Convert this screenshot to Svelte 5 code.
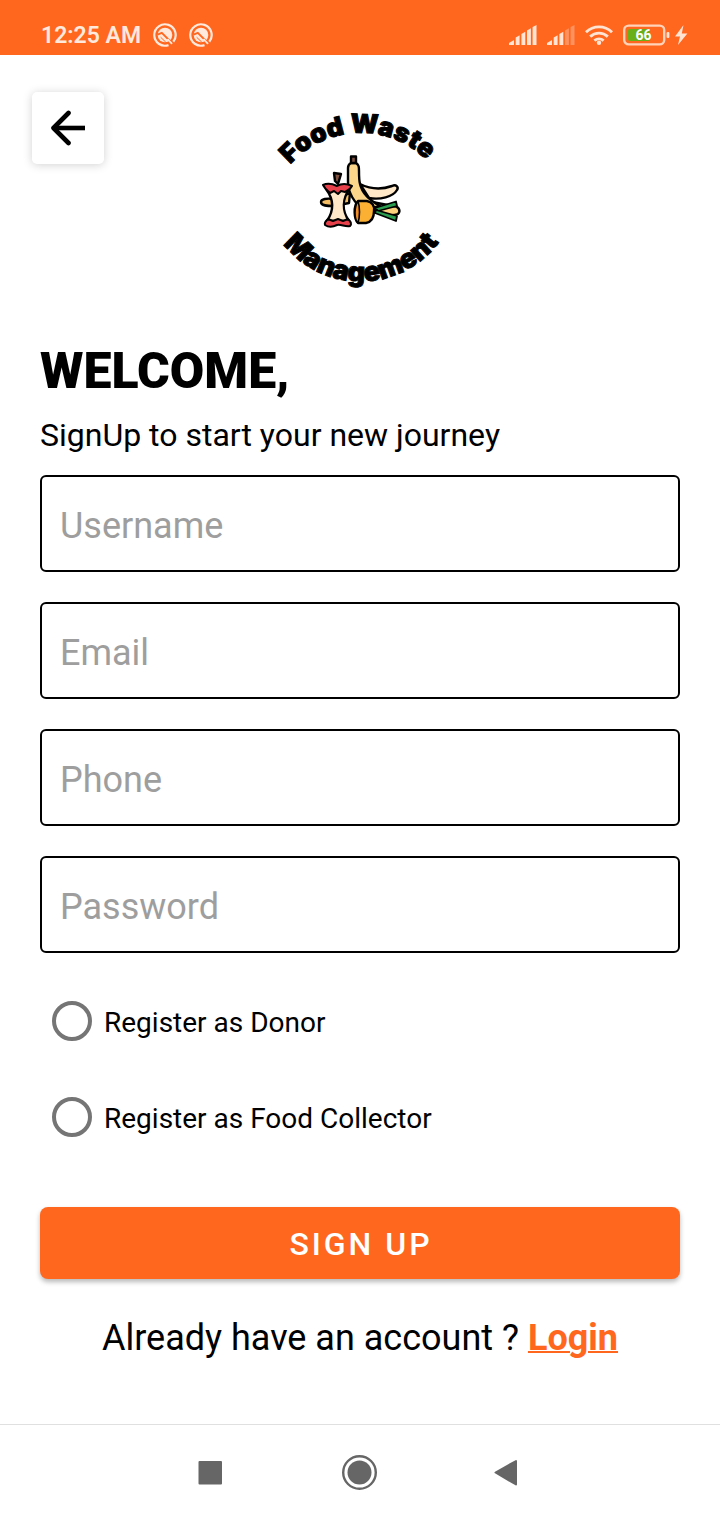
<script>
  const fields = [
    { id: 'username', label: 'Username', type: 'text' },
    { id: 'email', label: 'Email', type: 'email' },
    { id: 'phone', label: 'Phone', type: 'tel' },
    { id: 'password', label: 'Password', type: 'password' }
  ];
  const roles = [
    { id: 'donor', label: 'Register as Donor' },
    { id: 'collector', label: 'Register as Food Collector' }
  ];
  let role = $state('');
  const bars = [
    'M6.7 20V12.4L10.6 10.2V20Z',
    'M12.4 20V9L16.3 6.8V20Z',
    'M18 20V5.4L21.9 3.2V20Z',
    'M23.6 20V2L27.5 0V20Z'
  ];
</script>

{#snippet badge()}
  <svg width="24" height="24" viewBox="0 0 24 24" fill="none" aria-hidden="true">
    <path d="M15.5 22.1A10.7 10.7 0 1 1 20.3 18.7" stroke="#ffe9dc" stroke-width="2.2" />
    <circle cx="12" cy="12" r="7.3" fill="#ffe9dc" />
    <path d="M4.5 11.6L8.8 9.8L18.5 19.5" stroke="#ff671f" stroke-width="1.8" />
    <path d="M7.6 14.2L12.8 19.2" stroke="#ff671f" stroke-width="1" />
    <path d="M14.5 16L19 20.8" stroke="#ffe9dc" stroke-width="1.8" />
  </svg>
{/snippet}

{#snippet signal(strong)}
  <svg width="28" height="20" viewBox="0 0 28 20" fill="#ffe3d3" aria-hidden="true">
    <path d="M0 20V18L5 15V20Z" />
    {#each bars as bar, i}
      <path d={bar} opacity={i < strong ? 1 : 0.35} />
    {/each}
  </svg>
{/snippet}

<div class="screen">
  <div class="status">
    <div class="group left">
      <span class="time">12:25 AM</span>
      {@render badge()}
      {@render badge()}
    </div>
    <div class="group right">
      {@render signal(4)}
      {@render signal(2)}
      <svg width="28" height="20" viewBox="0 0 28 20" fill="none" stroke="#ffe3d3" stroke-width="2.9" aria-hidden="true">
        <path d="M1 7.2A18.6 18.6 0 0 1 27 7.2M5.2 11.6A12.8 12.8 0 0 1 22.8 11.6M9.4 15.6A7 7 0 0 1 18.6 15.6" />
        <circle cx="14" cy="17.8" r="2.2" fill="#ffe3d3" stroke="none" />
      </svg>
      <svg width="66" height="22" viewBox="0 0 66 22" aria-hidden="true">
        <rect x="1.2" y="1.6" width="40" height="18.8" rx="4.5" fill="none" stroke="#ffd3b9" stroke-width="2.4" />
        <rect x="5" y="5" width="22" height="12" rx="2" fill="#6aae18" />
        <rect x="43.6" y="8" width="2.8" height="6" rx="1" fill="#ffe3d3" />
        <text x="20.5" y="16" text-anchor="middle" class="charge">66</text>
        <path d="M60.5 1L52 12.6H57L55 21L64.4 9.4H58.8Z" fill="#ffe3d3" />
      </svg>
    </div>
  </div>

  <header>
    <button class="back" type="button" aria-label="Back">
      <svg width="36" height="36" viewBox="0 0 36 36" fill="none" stroke="#000" stroke-width="4.6" aria-hidden="true">
        <path d="M35 18H4" />
        <path d="M18.5 3L3.5 18L18.5 33" stroke-linecap="round" stroke-linejoin="round" />
      </svg>
    </button>
    <svg class="logo" width="180" height="190" viewBox="270 105 180 190" role="img" aria-label="Food Waste Management">
      <defs>
        <path id="arc-top" d="M285 171A94 94 0 0 1 432 166" />
        <path id="arc-bottom" d="M277 235A98 98 0 0 0 445 233" />
      </defs>
      <text class="arc"><textPath href="#arc-top" startOffset="50%" text-anchor="middle">Food Waste</textPath></text>
      <text class="arc lower"><textPath href="#arc-bottom" startOffset="50%" text-anchor="middle">Management</textPath></text>
      <g stroke="#000" stroke-width="2.4" stroke-linejoin="round" stroke-linecap="round">
        <path d="M333 199C327 198 321 199 321 202C321 206 327 206 334 206L349 203L350 193Z" fill="#f5bd63" />
        <path d="M360 184C370 189 381 190 392 186C396 184 399 187 397 190C393 197 380 200 369 198Z" fill="#ffe8c8" />
        <path d="M372 202L393 206C399 206 401 211 398 214C390 217 381 214 373 210Z" fill="#fbd17d" />
        <path d="M351 163L356 163C359 165 359 167 359 171C359 176 359 180 360 184C362 193 369 200 380 206L365 210C354 204 348 192 348 182V168C348 165 349 164 351 163Z" fill="#fcd78b" />
        <path d="M351 156.5H356V163H351Z" fill="#80513f" />
        <path d="M375 208L396 201.5L397 206L378 211Z" fill="#2b9d50" stroke-width="1.8" />
        <path d="M376 210L397 216L396 221L375 213Z" fill="#2b9d50" stroke-width="1.8" />
        <path d="M358 201H367C372 202 375 206 374 211C374 218 371 222 366 223L358 223C354 219 353 206 358 201Z" fill="#fbb034" />
        <path d="M358 201C354 207 354 219 358 223C360 217 360 207 358 201Z" fill="#f28c28" stroke-width="1.6" />
        <path d="M326 189C335 201 333 212 327 221L349 221C342 211 342 199 350 188Z" fill="#ffe8c8" />
        <path d="M323 185C327 183 333 184 337 186C342 183 348 184 352 186C350 190 347 190 345 192L341 191L338 194L334 191L330 193C328 191 325 189 323 185Z" fill="#e8404a" stroke-width="2" />
        <path d="M328 219L333 221L338 219L343 221L348 219C351 222 352 224 350 226C345 227 341 224 337 225C333 227 328 227 325 225C324 222 326 221 328 219Z" fill="#e8404a" stroke-width="2" />
        <path d="M334 173L341 174L338 184L335 181Z" fill="#80513f" />
      </g>
    </svg>
  </header>

  <main>
    <h1>WELCOME,</h1>
    <p class="intro">SignUp to start your new journey</p>
    <form onsubmit={(e) => e.preventDefault()}>
      <div class="fields">
        {#each fields as field (field.id)}
          <input id={field.id} type={field.type} placeholder={field.label} aria-label={field.label} />
        {/each}
      </div>
      <div class="roles">
        {#each roles as option (option.id)}
          <label for={option.id}>
            <input id={option.id} type="radio" name="role" value={option.id} bind:group={role} />
            <span>{option.label}</span>
          </label>
        {/each}
      </div>
      <button class="submit" type="submit">SIGN UP</button>
    </form>
    <p class="login">Already have an account ? <a href="#login">Login</a></p>
  </main>

  <nav aria-label="System">
    <button type="button" aria-label="Recent apps">
      <svg width="36" height="36" viewBox="0 0 36 36" aria-hidden="true"><rect x="4.5" y="6" width="23.5" height="23.5" rx="1" fill="#666" /></svg>
    </button>
    <button type="button" aria-label="Home">
      <svg width="36" height="36" viewBox="0 0 36 36" aria-hidden="true">
        <circle cx="17.5" cy="17.5" r="16.3" fill="none" stroke="#666" stroke-width="2.4" />
        <circle cx="17.5" cy="17.5" r="12" fill="#666" />
      </svg>
    </button>
    <button type="button" aria-label="Previous screen">
      <svg width="36" height="36" viewBox="0 0 36 36" aria-hidden="true"><path d="M5.5 17.5L26 6V29.5Z" fill="#666" stroke="#666" stroke-linejoin="round" stroke-width="2" /></svg>
    </button>
  </nav>
</div>

<style>
  :global(body) {
    margin: 0;
    background: #fff;
  }
  .screen {
    min-height: 100vh;
    display: flex;
    flex-direction: column;
    font-family: Roboto, sans-serif;
    color: #000;
    background: #fff;
  }
  svg {
    display: block;
    flex: none;
  }
  .status {
    display: flex;
    justify-content: space-between;
    height: 55px;
    padding: 14px 31px 0 41px;
    box-sizing: border-box;
    background: #ff671f;
  }
  .group {
    display: flex;
    align-items: center;
    height: 42px;
  }
  .left {
    gap: 12px;
  }
  .right {
    gap: 10px;
  }
  .time {
    font-size: 23px;
    font-weight: 600;
    color: #ffe9dc;
  }
  .charge {
    font-size: 14px;
    font-weight: 700;
    fill: #fff;
  }
  header {
    display: grid;
    grid-template-columns: 1fr auto 1fr;
    align-items: start;
    padding: 37px 32px 0;
  }
  .back {
    display: grid;
    place-items: center;
    width: 72px;
    height: 72px;
    padding: 0;
    border: 0;
    border-radius: 5px;
    background: #fff;
    box-shadow: 0 1px 10px rgba(0, 0, 0, 0.18);
  }
  .logo {
    margin-top: 13px;
  }
  .arc {
    font-family: Inter, sans-serif;
    font-size: 26px;
    font-weight: 900;
    stroke: #000;
    stroke-width: 1px;
  }
  .lower {
    font-size: 27px;
  }
  main {
    padding: 46px 40px 0;
  }
  h1 {
    margin: 0;
    font-size: 50px;
    line-height: 60px;
    font-weight: 900;
  }
  p {
    margin: 0;
  }
  .intro {
    margin: 14px 0 20px;
    font-size: 32px;
    line-height: 40px;
  }
  .fields {
    display: grid;
    gap: 30px;
  }
  .fields input {
    width: 100%;
    height: 97px;
    box-sizing: border-box;
    padding: 4px 18px 0;
    border: 2px solid #000;
    border-radius: 6px;
    background: #fff;
    color: #000;
    font: 36px Roboto, sans-serif;
  }
  .fields input::placeholder {
    color: #9e9e9e;
    opacity: 1;
  }
  .roles {
    padding: 20px 12px 0;
  }
  .roles label {
    display: flex;
    align-items: center;
    gap: 12px;
    height: 96px;
    font-size: 28px;
  }
  .roles span {
    padding-top: 2px;
  }
  .roles input {
    appearance: none;
    width: 40px;
    height: 40px;
    margin: 0;
    border: 4px solid #757575;
    border-radius: 50%;
  }
  .roles input:checked {
    border-color: #ff671f;
    background: radial-gradient(#ff671f 50%, #fff 54%);
  }
  .submit {
    display: block;
    width: 100%;
    height: 72px;
    margin-top: 42px;
    padding: 2px 0 0 2px;
    border: 0;
    border-radius: 8px;
    background: #ff671f;
    color: #fff;
    font: 500 32px Roboto, sans-serif;
    letter-spacing: 3px;
    box-shadow: 0 3px 5px rgba(0, 0, 0, 0.28);
  }
  .login {
    margin: 37px 0 20px;
    text-align: center;
    font-size: 36px;
    line-height: 44px;
  }
  .login a {
    color: #ff671f;
    font-weight: 700;
    text-decoration-thickness: 2px;
  }
  nav {
    display: flex;
    justify-content: center;
    gap: 112px;
    margin-top: auto;
    height: 95px;
    border-top: 1px solid #e0e0e0;
  }
  nav button {
    padding: 0;
    border: 0;
    background: none;
  }
</style>
